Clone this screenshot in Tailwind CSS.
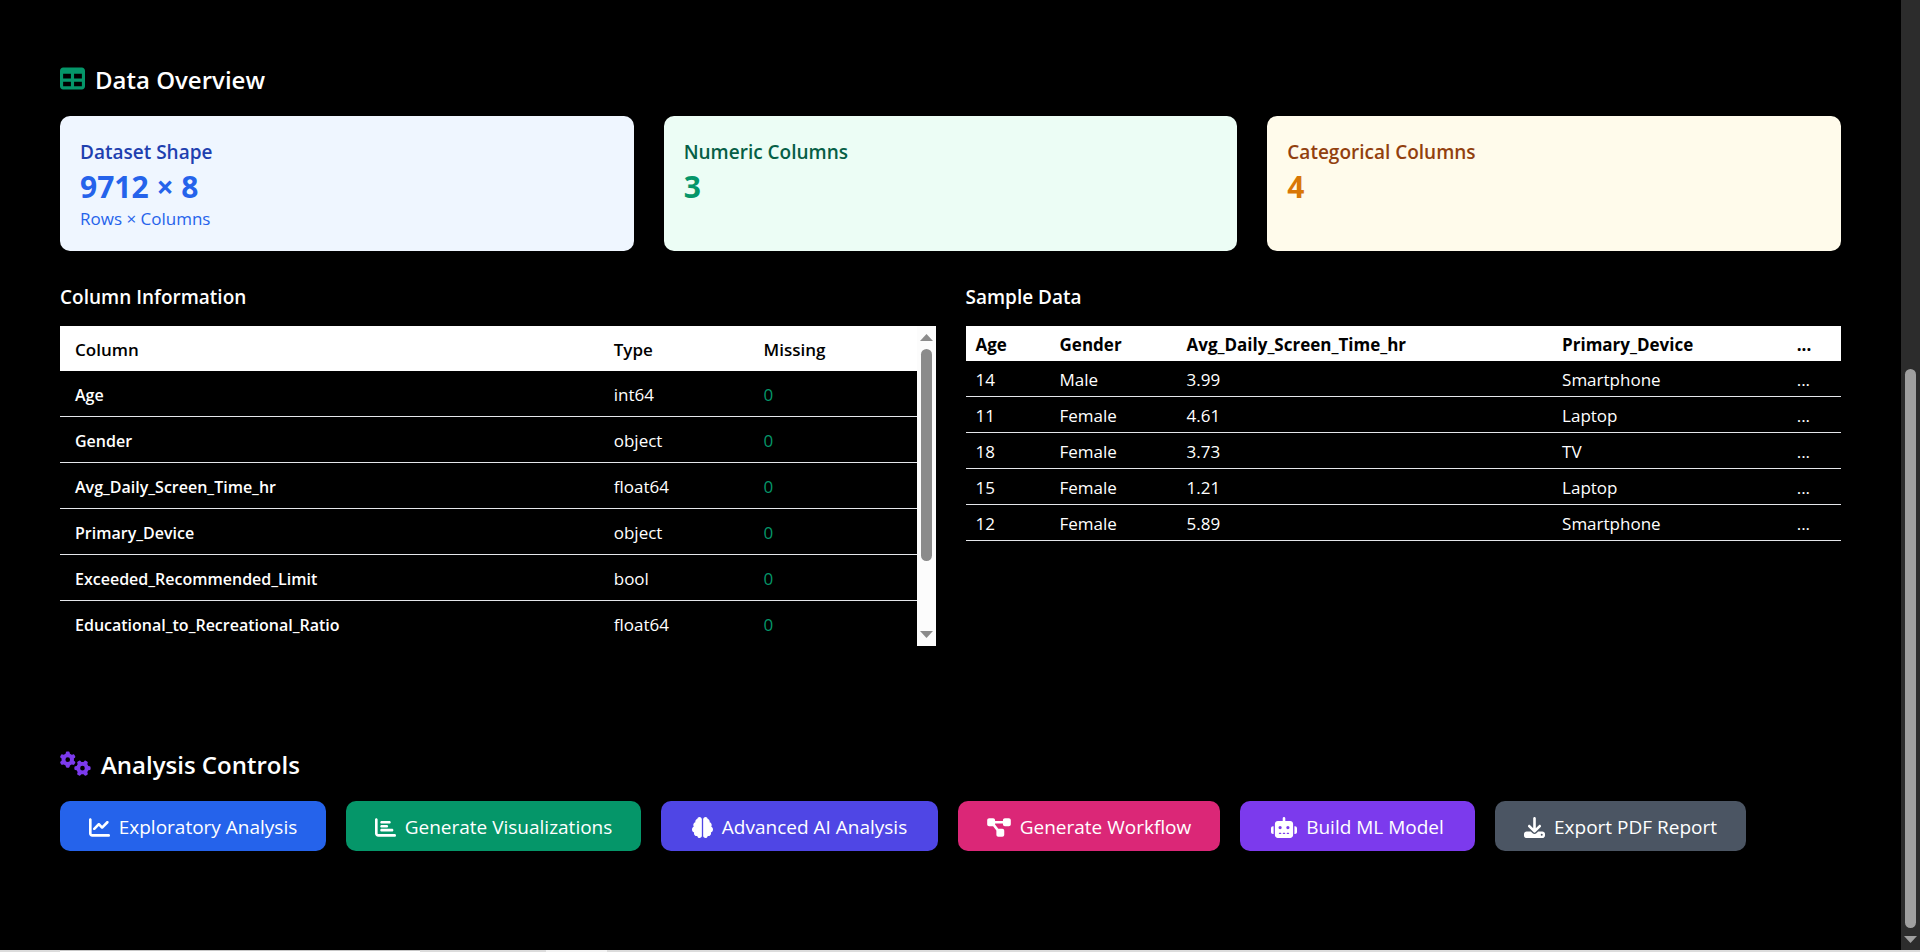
<!DOCTYPE html>
<html lang="en">
<head>
<meta charset="utf-8">
<title>Data Overview</title>
<script src="https://cdn.jsdelivr.net/npm/@tailwindcss/browser@4"></script>
</head>
<body class="min-h-screen bg-black font-['Open_Sans','Noto_Sans',sans-serif] text-white">
<div class="flex h-screen flex-col overflow-hidden">
  <div class="flex min-h-0 flex-1">
    <main class="min-w-0 flex-1 overflow-hidden px-[60px] pt-[60px]">
      <section>
        <h2 class="mb-4 flex h-10 items-center gap-[10px] text-2xl font-semibold">
          <svg class="mb-[3px] size-[25px] fill-[#059669]" viewBox="0 0 512 512" aria-hidden="true"><path d="M64 256V160H224v96H64zm0 64H224v96H64V320zm224 96V320H448v96H288zM448 256H288V160H448v96zM64 32C28.7 32 0 60.7 0 96V416c0 35.3 28.7 64 64 64H448c35.3 0 64-28.7 64-64V96c0-35.3-28.7-64-64-64H64z"/></svg>
          Data Overview
        </h2>
        <div class="mb-[30px] grid grid-cols-3 gap-[30px]">
          <div class="rounded-[10px] bg-[#eff6ff] p-5">
            <h3 class="text-[19px] leading-8 font-semibold text-[#1e40af]">Dataset Shape</h3>
            <p class="text-[30px] leading-[38px] font-bold text-[#2563eb]">9712 × 8</p>
            <p class="text-[17px] leading-[25px] text-[#2563eb]">Rows × Columns</p>
          </div>
          <div class="rounded-[10px] bg-[#ecfdf5] p-5">
            <h3 class="text-[19px] leading-8 font-semibold text-[#065f46]">Numeric Columns</h3>
            <p class="text-[30px] leading-[38px] font-bold text-[#059669]">3</p>
          </div>
          <div class="rounded-[10px] bg-[#fffbeb] p-5">
            <h3 class="text-[19px] leading-8 font-semibold text-[#92400e]">Categorical Columns</h3>
            <p class="text-[30px] leading-[38px] font-bold text-[#d97706]">4</p>
          </div>
        </div>
        <div class="grid grid-cols-2 gap-[30px]">
          <div class="min-w-0">
            <h3 class="mb-[13px] text-[19px] leading-8 font-semibold">Column Information</h3>
            <div class="flex h-80 overflow-hidden">
              <table class="h-fit min-w-0 flex-1 table-fixed border-separate border-spacing-0 text-left text-[17px] leading-[21px] [&_td]:border-b [&_td]:border-[#e5e7eb] [&_td]:px-[15px] [&_td]:pt-[2px] [&_th]:px-[15px] [&_th]:pt-[2px]">
                <colgroup><col class="w-[62.9%]"><col class="w-[17.5%]"><col></colgroup>
                <thead class="bg-white text-black">
                  <tr class="h-[45px]"><th class="font-semibold">Column</th><th class="font-semibold">Type</th><th class="font-semibold">Missing</th></tr>
                </thead>
                <tbody>
                  <tr class="h-[46px]"><td class="text-base font-semibold">Age</td><td>int64</td><td class="text-[#059669]">0</td></tr>
                  <tr class="h-[46px]"><td class="text-base font-semibold">Gender</td><td>object</td><td class="text-[#059669]">0</td></tr>
                  <tr class="h-[46px]"><td class="text-base font-semibold">Avg_Daily_Screen_Time_hr</td><td>float64</td><td class="text-[#059669]">0</td></tr>
                  <tr class="h-[46px]"><td class="text-base font-semibold">Primary_Device</td><td>object</td><td class="text-[#059669]">0</td></tr>
                  <tr class="h-[46px]"><td class="text-base font-semibold">Exceeded_Recommended_Limit</td><td>bool</td><td class="text-[#059669]">0</td></tr>
                  <tr class="h-[46px]"><td class="text-base font-semibold">Educational_to_Recreational_Ratio</td><td>float64</td><td class="text-[#059669]">0</td></tr>
                </tbody>
              </table>
              <div class="flex w-[19px] shrink-0 flex-col items-center bg-[#fcfcfc] py-2" aria-hidden="true">
                <svg class="h-[7px] w-[13px] shrink-0 fill-[#8b8b8b]" viewBox="0 0 13 7"><path d="M6.500 0L13 7H0z"/></svg>
                <div class="mt-2 h-[212px] w-[11px] rounded-full bg-[#8b8b8b]"></div>
                <svg class="mt-auto h-[7px] w-[13px] shrink-0 fill-[#8b8b8b]" viewBox="0 0 13 7"><path d="M0 0H13L6.500 7z"/></svg>
              </div>
            </div>
          </div>
          <div class="min-w-0">
            <h3 class="mb-[13px] text-[19px] leading-8 font-semibold">Sample Data</h3>
            <table class="w-full table-fixed border-separate border-spacing-0 text-left text-[17px] leading-[21px] [&_td]:border-b [&_td]:border-[#e5e7eb] [&_td]:px-[10px] [&_td]:pt-[2px] [&_th]:px-[10px] [&_th]:pt-[2px]">
              <colgroup><col class="w-[9.6%]"><col class="w-[14.5%]"><col class="w-[42.9%]"><col class="w-[26.8%]"><col></colgroup>
              <thead class="bg-white text-black">
                <tr class="h-[35px]"><th class="font-bold">Age</th><th class="font-bold">Gender</th><th class="font-bold">Avg_Daily_Screen_Time_hr</th><th class="font-bold">Primary_Device</th><th class="font-bold">...</th></tr>
              </thead>
              <tbody>
                <tr class="h-9"><td>14</td><td>Male</td><td>3.99</td><td>Smartphone</td><td>...</td></tr>
                <tr class="h-9"><td>11</td><td>Female</td><td>4.61</td><td>Laptop</td><td>...</td></tr>
                <tr class="h-9"><td>18</td><td>Female</td><td>3.73</td><td>TV</td><td>...</td></tr>
                <tr class="h-9"><td>15</td><td>Female</td><td>1.21</td><td>Laptop</td><td>...</td></tr>
                <tr class="h-9"><td>12</td><td>Female</td><td>5.89</td><td>Smartphone</td><td>...</td></tr>
              </tbody>
            </table>
          </div>
        </div>
      </section>

      <section class="mt-[99px]">
        <h2 class="mb-4 flex h-10 items-center gap-[10px] text-2xl font-semibold">
          <svg class="mb-[3px] h-[25px] w-[31px] fill-[#7c3aed]" viewBox="0 0 640 512" aria-hidden="true"><path d="M308.5 135.3c7.1-6.3 9.9-16.2 6.2-25c-2.3-5.3-4.8-10.5-7.6-15.5L304 89.4c-3-5-6.3-9.9-9.8-14.6c-5.7-7.6-15.7-10.1-24.7-7.1l-28.2 9.3c-10.7-8.8-23-16-36.2-20.9L199 27.1c-1.9-9.3-9.1-16.7-18.5-17.8C173.9 8.4 167.2 8 160.4 8h-.7c-6.8 0-13.5 .4-20.1 1.2c-9.4 1.1-16.6 8.6-18.5 17.8L115 56.1c-13.3 5-25.5 12.1-36.2 20.9L50.5 67.8c-9-3-19-.5-24.7 7.1c-3.5 4.7-6.8 9.6-9.9 14.6l-3 5.3c-2.8 5-5.3 10.2-7.6 15.6c-3.7 8.7-.9 18.6 6.2 25l22.2 19.8C32.6 161.9 32 168.9 32 176s.6 14.1 1.700 20.900L11.500 216.700c-7.100 6.300-9.900 16.200-6.200 25c2.300 5.300 4.800 10.500 7.600 15.600l3 5.200c3 5.100 6.300 9.900 9.900 14.600c5.700 7.600 15.700 10.100 24.700 7.100l28.200-9.300c10.700 8.800 23 16 36.200 20.900l6.100 29.100c1.900 9.300 9.100 16.700 18.500 17.800c6.700 .8 13.500 1.200 20.400 1.200s13.700-.4 20.400-1.200c9.400-1.100 16.600-8.600 18.500-17.800l6.100-29.100c13.300-5 25.500-12.100 36.200-20.900l28.200 9.300c9 3 19 .5 24.700-7.100c3.500-4.700 6.800-9.500 9.800-14.600l3.100-5.400c2.800-5 5.300-10.200 7.600-15.500c3.700-8.700 .9-18.600-6.200-25l-22.200-19.800c1.100-6.800 1.700-13.800 1.700-20.900s-.6-14.100-1.700-20.900l22.200-19.800zM112 176a48 48 0 1 1 96 0 48 48 0 1 1 -96 0zM504.700 500.500c6.300 7.100 16.200 9.900 25 6.200c5.300-2.300 10.500-4.800 15.500-7.600l5.400-3.100c5-3 9.900-6.300 14.600-9.800c7.600-5.700 10.100-15.700 7.100-24.700l-9.300-28.200c8.800-10.700 16-23 20.900-36.200l29.100-6.100c9.300-1.900 16.700-9.100 17.800-18.500c.8-6.700 1.200-13.500 1.200-20.400s-.4-13.700-1.200-20.400c-1.100-9.400-8.600-16.600-17.800-18.500L583.900 307c-5-13.300-12.100-25.500-20.900-36.200l9.300-28.200c3-9 .5-19-7.100-24.700c-4.700-3.500-9.600-6.800-14.600-9.900l-5.300-3c-5-2.800-10.200-5.300-15.600-7.600c-8.700-3.700-18.600-.9-25 6.200l-19.800 22.200c-6.800-1.100-13.800-1.700-20.900-1.700s-14.100 .6-20.900 1.700l-19.800-22.200c-6.300-7.100-16.200-9.900-25-6.200c-5.300 2.300-10.500 4.800-15.600 7.600l-5.200 3c-5.100 3-9.900 6.300-14.600 9.900c-7.600 5.700-10.100 15.700-7.100 24.700l9.300 28.200c-8.800 10.700-16 23-20.900 36.200L315.100 313c-9.300 1.900-16.700 9.100-17.800 18.500c-.8 6.700-1.200 13.500-1.200 20.400s.4 13.700 1.200 20.400c1.100 9.400 8.600 16.600 17.800 18.500l29.100 6.100c5 13.300 12.100 25.500 20.900 36.200l-9.300 28.200c-3 9-.5 19 7.100 24.700c4.700 3.500 9.500 6.800 14.600 9.800l5.400 3.100c5 2.800 10.200 5.300 15.500 7.600c8.700 3.700 18.600 .9 25-6.200l19.800-22.200c6.800 1.100 13.800 1.700 20.900 1.700s14.100-.6 20.900-1.700l19.800 22.200zM464 304a48 48 0 1 1 0 96 48 48 0 1 1 0-96z"/></svg>
          Analysis Controls
        </h2>
        <div class="flex flex-wrap gap-5 text-[19px] whitespace-nowrap">
          <button type="button" class="flex h-[50px] w-[266px] items-center justify-center gap-[9px] rounded-[10px] bg-[#2563eb] pt-[2px]">
            <svg class="size-[21px] fill-current" viewBox="0 0 512 512" aria-hidden="true"><path d="M64 64c0-17.700-14.300-32-32-32S0 46.300 0 64V400c0 44.200 35.800 80 80 80H480c17.700 0 32-14.300 32-32s-14.300-32-32-32H80c-8.800 0-16-7.200-16-16V64zm406.600 86.600c12.500-12.500 12.500-32.800 0-45.300s-32.800-12.500-45.300 0L320 210.700l-57.400-57.400c-12.500-12.500-32.800-12.500-45.300 0l-112 112c-12.500 12.500-12.500 32.800 0 45.300s32.800 12.500 45.300 0L240 221.300l57.400 57.400c12.500 12.500 32.800 12.500 45.300 0l128-128z"/></svg>
            Exploratory Analysis
          </button>
          <button type="button" class="flex h-[50px] w-[295px] items-center justify-center gap-[9px] rounded-[10px] bg-[#059669] pt-[2px]">
            <svg class="size-[21px] fill-current" viewBox="0 0 512 512" aria-hidden="true"><path d="M32 32c17.700 0 32 14.300 32 32V400c0 8.800 7.200 16 16 16H480c17.700 0 32 14.300 32 32s-14.300 32-32 32H80c-44.200 0-80-35.800-80-80V64C0 46.300 14.300 32 32 32zm96 96c0-17.700 14.300-32 32-32l192 0c17.700 0 32 14.300 32 32s-14.300 32-32 32H160c-17.700 0-32-14.300-32-32zm32 64H288c17.700 0 32 14.300 32 32s-14.300 32-32 32H160c-17.700 0-32-14.300-32-32s14.300-32 32-32zm0 96H416c17.700 0 32 14.300 32 32s-14.300 32-32 32H160c-17.700 0-32-14.300-32-32s14.300-32 32-32z"/></svg>
            Generate Visualizations
          </button>
          <button type="button" class="flex h-[50px] w-[277px] items-center justify-center gap-[9px] rounded-[10px] bg-[#4f46e5] pt-[2px]">
            <svg class="size-[21px] fill-current" viewBox="0 0 512 512" aria-hidden="true"><path d="M184 0c30.900 0 56 25.100 56 56V456c0 30.900-25.100 56-56 56c-28.900 0-52.700-21.900-55.700-50.100c-5.200 1.400-10.700 2.100-16.300 2.100c-35.300 0-64-28.700-64-64c0-7.400 1.300-14.600 3.600-21.200C21.400 367.400 0 338.200 0 304c0-31.900 18.700-59.500 45.800-72.300C37.100 220.800 32 207 32 192c0-30.700 21.600-56.300 50.400-62.600C80.800 123.900 80 118 80 112c0-29.900 20.600-55.100 48.300-62.100C131.300 21.900 155.100 0 184 0zM328 0c28.900 0 52.600 21.900 55.700 49.900c27.800 7 48.300 32.100 48.300 62.100c0 6-.8 11.900-2.400 17.400c28.800 6.200 50.400 31.900 50.400 62.600c0 15-5.100 28.800-13.800 39.700C493.300 244.500 512 272.100 512 304c0 34.200-21.400 63.400-51.600 74.800c2.300 6.600 3.600 13.800 3.600 21.200c0 35.300-28.700 64-64 64c-5.600 0-11.100-.7-16.300-2.100c-3 28.200-26.800 50.100-55.700 50.100c-30.900 0-56-25.100-56-56V56c0-30.900 25.100-56 56-56z"/></svg>
            Advanced AI Analysis
          </button>
          <button type="button" class="flex h-[50px] w-[262px] items-center justify-center gap-[9px] rounded-[10px] bg-[#db2777] pt-[2px]">
            <svg class="h-[21px] w-6 fill-current" viewBox="0 0 576 512" aria-hidden="true"><path d="M0 80C0 53.500 21.500 32 48 32h96c26.500 0 48 21.500 48 48V96H384V80c0-26.500 21.500-48 48-48h96c26.500 0 48 21.500 48 48v96c0 26.500-21.500 48-48 48H432c-26.500 0-48-21.500-48-48V160H192v16c0 1.700-.1 3.400-.3 5L272 288h96c26.500 0 48 21.500 48 48v96c0 26.500-21.500 48-48 48H272c-26.500 0-48-21.500-48-48V336c0-1.700 .1-3.400 .3-5L144 224H48c-26.500 0-48-21.500-48-48V80z"/></svg>
            Generate Workflow
          </button>
          <button type="button" class="flex h-[50px] w-[235px] items-center justify-center gap-[9px] rounded-[10px] bg-[#7c3aed] pt-[2px]">
            <svg class="h-[21px] w-[26px] fill-current" viewBox="0 0 640 512" aria-hidden="true"><path d="M320 0c17.700 0 32 14.300 32 32V96H472c39.800 0 72 32.200 72 72V440c0 39.800-32.200 72-72 72H168c-39.800 0-72-32.200-72-72V168c0-39.800 32.200-72 72-72H288V32c0-17.700 14.300-32 32-32zM208 384c-8.800 0-16 7.200-16 16s7.200 16 16 16h32c8.800 0 16-7.200 16-16s-7.200-16-16-16H208zm96 0c-8.800 0-16 7.200-16 16s7.200 16 16 16h32c8.800 0 16-7.200 16-16s-7.200-16-16-16H304zm96 0c-8.800 0-16 7.200-16 16s7.200 16 16 16h32c8.800 0 16-7.200 16-16s-7.200-16-16-16H400zM264 256a40 40 0 1 0 -80 0 40 40 0 1 0 80 0zm152 40a40 40 0 1 0 0-80 40 40 0 1 0 0 80zM48 224H64V416H48c-26.500 0-48-21.500-48-48V272c0-26.500 21.500-48 48-48zm544 0c26.500 0 48 21.500 48 48v96c0 26.500-21.500 48-48 48H576V224h16z"/></svg>
            Build ML Model
          </button>
          <button type="button" class="flex h-[50px] w-[251px] items-center justify-center gap-[9px] rounded-[10px] bg-[#4b5563] pt-[2px]">
            <svg class="size-[21px] fill-current" viewBox="0 0 512 512" aria-hidden="true"><path d="M288 32c0-17.700-14.300-32-32-32s-32 14.300-32 32V274.700l-73.400-73.400c-12.500-12.500-32.800-12.500-45.300 0s-12.500 32.800 0 45.300l128 128c12.500 12.500 32.800 12.500 45.300 0l128-128c12.500-12.500 12.500-32.800 0-45.300s-32.800-12.500-45.300 0L288 274.700V32zM64 352c-35.300 0-64 28.700-64 64v32c0 35.300 28.700 64 64 64H448c35.300 0 64-28.700 64-64V416c0-35.300-28.700-64-64-64H346.500l-45.300 45.300c-25 25-65.500 25-90.500 0L165.500 352H64zm368 56a24 24 0 1 1 0 48 24 24 0 1 1 0-48z"/></svg>
            Export PDF Report
          </button>
        </div>
      </section>
    </main>
    <div class="flex w-[19px] shrink-0 flex-col items-center justify-end bg-[#2c2c2c] pb-[7px]" aria-hidden="true">
      <div class="mb-2 h-[559px] w-[11px] rounded-full bg-[#9f9f9f]"></div>
      <svg class="h-[7px] w-[13px] shrink-0 fill-[#9f9f9f]" viewBox="0 0 13 7"><path d="M0 0H13L6.500 7z"/></svg>
    </div>
  </div>
  <div class="flex h-[2px] shrink-0 bg-[#dcdcdc] pl-[60px]" aria-hidden="true">
    <div class="w-[360px] border-t border-[#c8c8c8] bg-white"></div>
    <div class="ml-[126px] w-[61px] bg-[#f3f3f3]"></div>
  </div>
</div>
</body>
</html>
